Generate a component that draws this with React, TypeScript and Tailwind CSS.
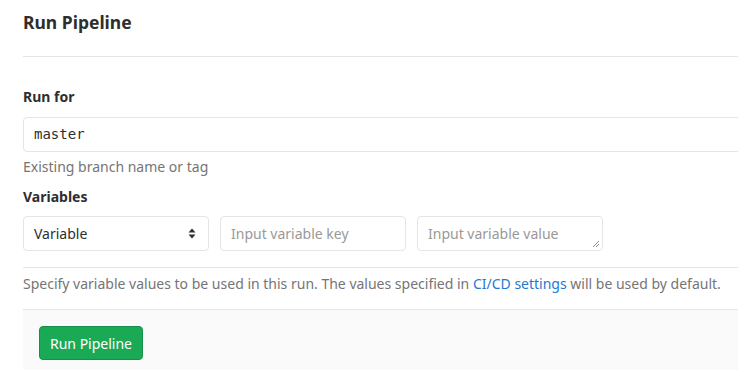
export default function App() {
  return (
    <div
      className="w-[738px] h-[370px] overflow-hidden bg-white text-[#2e2e2e]"
      style={{ fontFamily: '"Noto Sans", "Open Sans", sans-serif' }}
    >
      <div className="ml-[23px] w-[760px]">
        <div className="h-[57px] border-b border-[#e5e5e5] pt-[10px]">
          <h3 className="text-[17.5px] leading-6 font-bold">Run Pipeline</h3>
        </div>

        <div className="pt-[30px]">
          <label className="block text-[14px] leading-5 font-bold">Run for</label>
          <div className="mt-[10px] h-[35px] rounded border border-[#e5e5e5] flex items-center px-[10px]">
            <span style={{ fontFamily: '"DejaVu Sans Mono", monospace', fontSize: 14 }}>
              master
            </span>
          </div>
          <p className="mt-[5px] text-[14px] leading-5 text-[#757575]">
            Existing branch name or tag
          </p>

          <label className="block mt-[10px] text-[14px] leading-5 font-bold">
            Variables
          </label>
          <div className="mt-[9px] flex gap-[11px]">
            <div className="w-[186px] h-[35px] rounded border border-[#e5e5e5] flex items-center justify-between pl-[10px] pr-[12px] text-[14px]">
              <span>Variable</span>
              <svg width="8" height="11" viewBox="0 0 8 11">
                <path d="M4 0.5 L7.5 4.5 L0.5 4.5 Z" fill="#2e2e2e" />
                <path d="M4 10.5 L7.5 6.5 L0.5 6.5 Z" fill="#2e2e2e" />
              </svg>
            </div>
            <div className="w-[186px] h-[35px] rounded border border-[#e5e5e5] flex items-center px-[10px] text-[14px] text-[#999]">
              Input variable key
            </div>
            <div className="relative w-[186px] h-[35px] rounded border border-[#e5e5e5] flex items-center px-[10px] text-[14px] text-[#999]">
              Input variable value
              <svg className="absolute right-[2px] bottom-[2px]" width="8" height="8" viewBox="0 0 8 8">
                <path d="M7 1 L1 7 M7 4 L4 7" stroke="#888" strokeWidth="1" />
              </svg>
            </div>
          </div>

          <div className="mt-[16px] border-t border-[#e5e5e5] pt-[6px]">
            <p className="text-[14px] leading-5 text-[#757575]">
              Specify variable values to be used in this run. The values specified in{" "}
              <a className="text-[#1f78d1]">CI/CD settings</a> will be used by default.
            </p>
          </div>
        </div>

        <div className="mt-[15px] border-t border-[#e5e5e5] bg-[#fafafa] h-[80px] pt-[16px] pl-[16px]">
          <button className="h-[34px] px-[10px] rounded border border-[#168f48] bg-[#1aaa55] text-white text-[14px]">
            Run Pipeline
          </button>
        </div>
      </div>
    </div>
  );
}
